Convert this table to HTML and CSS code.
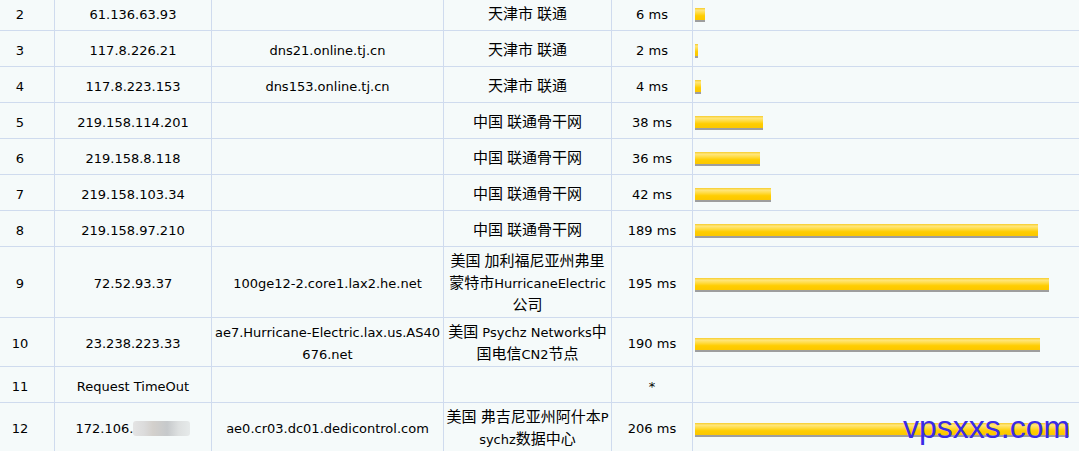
FILE: index.html
```html
<!DOCTYPE html>
<html lang="zh-CN">
<head>
<meta charset="utf-8">
<title>Traceroute</title>
<link rel="stylesheet" href="styles.css">
</head>
<body>
<div class="page">
<table class="trace">
<colgroup>
<col class="c-hop"><col class="c-ip"><col class="c-host"><col class="c-loc"><col class="c-time"><col class="c-bar">
</colgroup>
<tbody>
<tr><td class="hop">2</td><td>61.136.63.93</td><td></td><td><span class="cn">天津市</span> <span class="cn">联通</span></td><td>6 ms</td><td class="graph"><span class="bar" style="width:10px"></span></td></tr>
<tr><td class="hop">3</td><td>117.8.226.21</td><td>dns21.online.tj.cn</td><td><span class="cn">天津市</span> <span class="cn">联通</span></td><td>2 ms</td><td class="graph"><span class="bar" style="width:3px"></span></td></tr>
<tr><td class="hop">4</td><td>117.8.223.153</td><td>dns153.online.tj.cn</td><td><span class="cn">天津市</span> <span class="cn">联通</span></td><td>4 ms</td><td class="graph"><span class="bar" style="width:6px"></span></td></tr>
<tr><td class="hop">5</td><td>219.158.114.201</td><td></td><td><span class="cn">中国</span> <span class="cn">联通骨干网</span></td><td>38 ms</td><td class="graph"><span class="bar" style="width:68px"></span></td></tr>
<tr><td class="hop">6</td><td>219.158.8.118</td><td></td><td><span class="cn">中国</span> <span class="cn">联通骨干网</span></td><td>36 ms</td><td class="graph"><span class="bar" style="width:65px"></span></td></tr>
<tr><td class="hop">7</td><td>219.158.103.34</td><td></td><td><span class="cn">中国</span> <span class="cn">联通骨干网</span></td><td>42 ms</td><td class="graph"><span class="bar" style="width:76px"></span></td></tr>
<tr><td class="hop">8</td><td>219.158.97.210</td><td></td><td><span class="cn">中国</span> <span class="cn">联通骨干网</span></td><td>189 ms</td><td class="graph"><span class="bar" style="width:343px"></span></td></tr>
<tr><td class="hop">9</td><td>72.52.93.37</td><td>100ge12-2.core1.lax2.he.net</td><td><span class="cn">美国</span> <span class="cn">加利福尼亚州弗里蒙特市</span>HurricaneElectric<span class="cn">公司</span></td><td>195 ms</td><td class="graph"><span class="bar" style="width:354px"></span></td></tr>
<tr><td class="hop">10</td><td>23.238.223.33</td><td>ae7.Hurricane-Electric.lax.us.AS40676.net</td><td><span class="cn">美国</span> Psychz Networks<span class="cn">中国电信</span>CN2<span class="cn">节点</span></td><td>190 ms</td><td class="graph"><span class="bar" style="width:345px"></span></td></tr>
<tr><td class="hop">11</td><td>Request TimeOut</td><td></td><td></td><td>*</td><td class="graph"></td></tr>
<tr><td class="hop">12</td><td>172.106.<span class="blur"></span></td><td>ae0.cr03.dc01.dedicontrol.com</td><td><span class="cn">美国</span> <span class="cn">弗吉尼亚州阿什本</span>Psychz<span class="cn">数据中心</span></td><td>206 ms</td><td class="graph"><span class="bar" style="width:374px"></span></td></tr>
</tbody>
</table>
<div class="watermark">vpsxxs.com</div>
</div>
</body>
</html>
```
FILE: styles.css
```css
* { box-sizing: border-box; }
html, body { margin: 0; padding: 0; background: #f5fafa; overflow: hidden; }
.page { position: relative; width: 1079px; height: 451px; overflow: hidden; }
.trace {
  border-collapse: separate;
  border-spacing: 0;
  table-layout: fixed;
  width: 1093px;
  margin-top: -5px;
  font-family: "DejaVu Sans", sans-serif;
  font-size: 13px;
  color: #000;
}
.c-hop { width: 55px; }
.c-ip { width: 157px; }
.c-host { width: 232px; }
.c-loc { width: 168px; }
.c-time { width: 81px; }
.c-bar { width: 400px; }
.trace td {
  border-right: 1px solid #cfdbee;
  border-bottom: 1px solid #cfdbee;
  padding: 4px 2px 0;
  height: 36px;
  line-height: 22px;
  text-align: center;
  vertical-align: middle;
  word-break: break-all;
}
.trace td.hop { padding-right: 16px; }
.trace td.graph { text-align: left; padding-left: 2px; }
.cn { font-family: "Noto Sans CJK SC", sans-serif; font-size: 15px; line-height: 1; }
.bar {
  display: block;
  height: 14px;
  margin-top: 1px;
  border-bottom: 2px solid #9e9e9e;
  background: linear-gradient(#f6cc2a 0, #ffe67d 18%, #ffdc45 40%, #ffcd00 65%, #fbc700 100%);
}
.blur {
  display: inline-block;
  width: 57px;
  height: 15px;
  vertical-align: -3px;
  border-radius: 3px;
  background: linear-gradient(90deg, #e4e4e4 0, #dbdbdb 20%, #d3d0cc 35%, #c6c9cb 60%, #dde0e0 80%, #e6eaea 100%);
}
.watermark {
  position: absolute;
  left: 903px;
  top: 411px;
  font-family: "Liberation Sans", Arial, sans-serif;
  font-size: 32px;
  line-height: 32px;
  color: #3a2be6;
}
```
